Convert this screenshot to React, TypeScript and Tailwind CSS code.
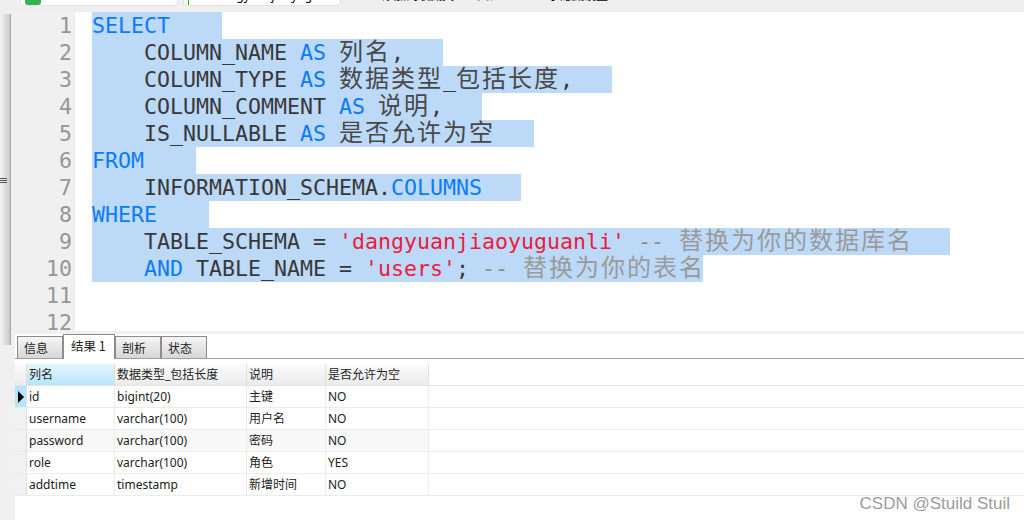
type Kind = "k" | "p" | "c" | "s" | "m" | "n";
type Seg = [Kind, string];

const kindClass: Record<Kind, string> = {
  k: "text-[#0b7bfb]",
  p: "text-[#383838]",
  c: "text-[#484848] font-['Noto_Sans_CJK_SC',sans-serif] text-[24px] leading-[0] tracking-[2px]",
  s: "text-[#ec1c3c]",
  m: "text-[#8c8c8c]",
  n: "ml-[2px] text-[#9a9a9a] font-['Noto_Sans_CJK_SC',sans-serif] text-[24px] leading-[0] tracking-[2px]",
};

const LINES: { w: string; segs: Seg[] }[] = [
  { w: "w-[130px]", segs: [["k", "SELECT"]] },
  { w: "w-[351px]", segs: [["p", "    COLUMN_NAME "], ["k", "AS"], ["p", " "], ["c", "列名"], ["p", ","]] },
  { w: "w-[520px]", segs: [["p", "    COLUMN_TYPE "], ["k", "AS"], ["p", " "], ["c", "数据类型"], ["p", "_"], ["c", "包括长度"], ["p", ","]] },
  { w: "w-[390px]", segs: [["p", "    COLUMN_COMMENT "], ["k", "AS"], ["p", " "], ["c", "说明"], ["p", ","]] },
  { w: "w-[442px]", segs: [["p", "    IS_NULLABLE "], ["k", "AS"], ["p", " "], ["c", "是否允许为空"]] },
  { w: "w-[104px]", segs: [["k", "FROM"]] },
  { w: "w-[429px]", segs: [["p", "    INFORMATION_SCHEMA."], ["k", "COLUMNS"]] },
  { w: "w-[117px]", segs: [["k", "WHERE"]] },
  { w: "w-[858px]", segs: [["p", "    TABLE_SCHEMA = "], ["s", "'dangyuanjiaoyuguanli'"], ["p", " "], ["m", "-- "], ["n", "替换为你的数据库名"]] },
  { w: "w-[611px]", segs: [["p", "    "], ["k", "AND"], ["p", " TABLE_NAME = "], ["s", "'users'"], ["p", "; "], ["m", "-- "], ["n", "替换为你的表名"]] },
];

const COLS = ["w-[88px]", "w-[132px]", "w-[79px]", "w-[103px]"];
const HEAD = ["列名", "数据类型_包括长度", "说明", "是否允许为空"];
const ROWS = [
  ["id", "bigint(20)", "主键", "NO"],
  ["username", "varchar(100)", "用户名", "NO"],
  ["password", "varchar(100)", "密码", "NO"],
  ["role", "varchar(100)", "角色", "YES"],
  ["addtime", "timestamp", "新增时间", "NO"],
];

function Tab({ label, active }: { label: string; active?: boolean }) {
  return active ? (
    <div className="z-10 h-[25px] w-[52px] border border-b-0 border-[#8c8c8c] bg-white pl-[7px] text-[12.5px] leading-[21px] text-[#222]">
      {label}
    </div>
  ) : (
    <div className="mt-[2px] h-[22px] w-[46px] border border-b-0 border-[#8c8c8c] bg-gradient-to-b from-[#f6f6f6] to-[#d6d6d6] pl-[6px] text-[12px] leading-[21px] text-[#222]">
      {label}
    </div>
  );
}

export default function App() {
  return (
    <div className="relative flex h-[520px] w-[1024px] flex-col overflow-hidden bg-white font-['Noto_Sans','Noto_Sans_CJK_SC',sans-serif]">
      {/* cropped window chrome */}
      <div className="flex h-3 shrink-0 items-start overflow-hidden bg-[#efefef] pl-5">
        <div className="-mt-3 flex h-[18px] w-[158px] items-end rounded-b-[3px] border border-[#e2e2e2] bg-white pl-1">
          <span className="h-[15px] w-4 rounded-[3px] bg-[#35b455]" />
        </div>
        <div className="-mt-3 ml-[5px] flex h-[18px] w-[158px] items-end rounded-b-[3px] border border-[#e2e2e2] bg-white pl-1">
          <span className="h-[15px] w-[15px] rounded-full bg-[#17a32f]" />
          <span className="mb-[3px] ml-[26px] text-[12px] leading-none whitespace-pre text-black">dangyuanjiaoyuguanli</span>
        </div>
        <div className="-mt-[10px] ml-[10px] flex items-start gap-[13px] text-[12px] leading-[12px] whitespace-pre text-black">
          <span className="w-[18px] text-[#4caf2d]">✓</span>
          <span className="w-[70px]">添加到收藏夹</span>
          <span className="text-[#777]">工具栏</span>
          <span className="ml-[22px] w-[70px]">显示隐藏设置</span>
        </div>
      </div>

      <div className="flex min-h-0 flex-1">
        {/* splitter on the left */}
        <div className="w-[15px] shrink-0 bg-[#f0f0f0] pt-[2px]">
          <div className="relative h-[331px] w-[11px] border-r border-[#a8a8a8] bg-gradient-to-r from-[#f4f4f4] to-[#c9c9c9]">
            <div className="absolute top-[164px] left-0 flex w-[7px] flex-col gap-px">
              <span className="h-px bg-[#555]" />
              <span className="h-px bg-[#555]" />
              <span className="h-px bg-[#555]" />
            </div>
          </div>
        </div>

        <div className="flex min-w-0 flex-1 flex-col">
          {/* SQL editor */}
          <div className="flex h-[319px] shrink-0 overflow-hidden font-['DejaVu_Sans_Mono',monospace] text-[21.6px] leading-[27px]">
            <div className="w-[60px] shrink-0 bg-[#f0f0f0] pr-[3px] text-right text-[#969696]">
              {[1, 2, 3, 4, 5, 6, 7, 8, 9, 10, 11, 12].map((n) => (
                <div key={n} className="h-[27px]">{n}</div>
              ))}
            </div>
            <div className="pl-[17px]">
              {LINES.map((line, i) => (
                <div key={i} className={`h-[27px] whitespace-pre bg-[#bcd9f8] ${line.w}`}>
                  {line.segs.map(([kind, text], j) => (
                    <span key={j} className={kindClass[kind]}>{text}</span>
                  ))}
                </div>
              ))}
            </div>
          </div>

          <div className="h-[3px] shrink-0 bg-[#f0f0f0]" />

          {/* result tabs */}
          <div className="flex h-[25px] shrink-0 items-start border-b border-[#a0a0a0] pl-[2px] font-['Noto_Sans_CJK_SC',sans-serif]">
            <Tab label="信息" />
            <Tab label="结果 1" active />
            <Tab label="剖析" />
            <Tab label="状态" />
          </div>

          {/* result grid */}
          <div className="mt-[5px] text-[12px] leading-[21px] text-[#222]">
            <div className="flex h-[22px] border-b border-[#e4e4e4]">
              <div className="w-[12px] border-r border-[#e0e0e0] bg-gradient-to-b from-[#fbfbfb] to-[#ebebeb]" />
              {HEAD.map((h, i) => (
                <div
                  key={h}
                  className={`${COLS[i]} border-r border-[#e0e0e0] pl-[2px] ${
                    i === 0
                      ? "bg-gradient-to-b from-[#e4f6fd] to-[#b7e5fb]"
                      : "bg-gradient-to-b from-[#fbfbfb] to-[#ebebeb]"
                  }`}
                >
                  {h}
                </div>
              ))}
            </div>
            {ROWS.map((row, r) => (
              <div key={row[0]} className="flex h-[22px] border-b border-[#ececec]">
                <div
                  className={`flex w-[12px] items-center justify-end border-r border-[#e0e0e0] pr-px ${
                    r === 0 ? "bg-[#b7e5fb]" : "bg-[#f1f1f1]"
                  }`}
                >
                  {r === 0 && (
                    <svg width="8" height="12" viewBox="0 0 8 12">
                      <path d="M1 0 L7 6 L1 12 Z" fill="#000" />
                    </svg>
                  )}
                </div>
                {row.map((cell, i) => (
                  <div
                    key={i}
                    className={`${COLS[i]} border-r border-[#ececec] pl-[2px] ${r === 2 ? "bg-[#f8f8f8]" : "bg-white"}`}
                  >
                    {cell}
                  </div>
                ))}
              </div>
            ))}
          </div>
        </div>
      </div>

      <div className="absolute top-[494px] right-[14px] font-['Liberation_Sans',sans-serif] text-[17px] leading-5 text-[#9c9c9c]">
        CSDN @Stuild Stuil
      </div>
    </div>
  );
}
